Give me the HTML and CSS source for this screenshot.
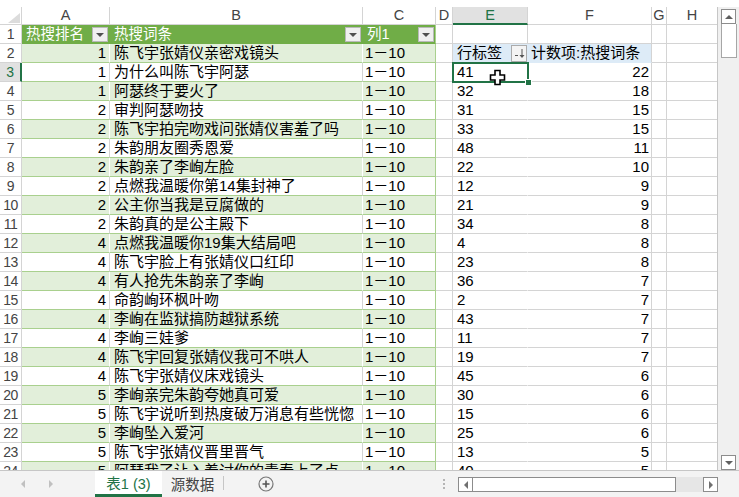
FILE: index.html
```html
<!DOCTYPE html>
<html lang="zh-CN">
<head>
  <meta charset="UTF-8">
  <title>表1 (3)</title>
  <link rel="stylesheet" href="styles.css">
</head>
<body>
<div class="app">
  <div class="main">
    <div class="grid">
      <div class="row colhead">
        <div class="c rh corner"><svg width="21" height="17" viewBox="0 0 21 17"><polygon points="20,6 20,16 8,16" fill="#dcdcdc"/></svg></div>
        <div class="c ca">A</div><div class="c cb">B</div><div class="c cc">C</div><div class="c cd">D</div>
        <div class="c ce selc">E</div><div class="c cf">F</div><div class="c cg">G</div><div class="c ch">H</div>
      </div>

      <div class="row">
        <div class="c rh">1</div>
        <div class="c ca t th">热搜排名<span class="dd"></span></div>
        <div class="c cb t th">热搜词条<span class="dd"></span></div>
        <div class="c cc t th last">列1<span class="dd"></span></div>
        <div class="c cd"></div><div class="c ce"></div><div class="c cf"></div><div class="c cg"></div><div class="c ch"></div>
      </div>

      <div class="row band">
        <div class="c rh">2</div>
        <div class="c ca t num">1</div><div class="c cb t">陈飞宇张婧仪亲密戏镜头</div><div class="c cc t last">1－10</div>
        <div class="c cd"></div>
        <div class="c ce pvh">行标签<span class="pbtn"><svg width="14" height="15" viewBox="0 0 14 15"><path d="M3 9.5h3M10 3v8" stroke="#555" stroke-width="1" fill="none"/><path d="M7.5 9l2.5 3 2.5-3z" fill="#555"/></svg></span></div>
        <div class="c cf pvh">计数项:热搜词条</div>
        <div class="c cg"></div><div class="c ch"></div>
      </div>

      <div class="row">
        <div class="c rh sel">3</div>
        <div class="c ca t num">1</div><div class="c cb t">为什么叫陈飞宇阿瑟</div><div class="c cc t last">1－10</div>
        <div class="c cd"></div><div class="c ce pv">41</div><div class="c cf num">22</div><div class="c cg"></div><div class="c ch"></div>
      </div>
      <div class="row band">
        <div class="c rh">4</div>
        <div class="c ca t num">1</div><div class="c cb t">阿瑟终于要火了</div><div class="c cc t last">1－10</div>
        <div class="c cd"></div><div class="c ce pv">32</div><div class="c cf num">18</div><div class="c cg"></div><div class="c ch"></div>
      </div>
      <div class="row">
        <div class="c rh">5</div>
        <div class="c ca t num">2</div><div class="c cb t">审判阿瑟吻技</div><div class="c cc t last">1－10</div>
        <div class="c cd"></div><div class="c ce pv">31</div><div class="c cf num">15</div><div class="c cg"></div><div class="c ch"></div>
      </div>
      <div class="row band">
        <div class="c rh">6</div>
        <div class="c ca t num">2</div><div class="c cb t">陈飞宇拍完吻戏问张婧仪害羞了吗</div><div class="c cc t last">1－10</div>
        <div class="c cd"></div><div class="c ce pv">33</div><div class="c cf num">15</div><div class="c cg"></div><div class="c ch"></div>
      </div>
      <div class="row">
        <div class="c rh">7</div>
        <div class="c ca t num">2</div><div class="c cb t">朱韵朋友圈秀恩爱</div><div class="c cc t last">1－10</div>
        <div class="c cd"></div><div class="c ce pv">48</div><div class="c cf num">11</div><div class="c cg"></div><div class="c ch"></div>
      </div>
      <div class="row band">
        <div class="c rh">8</div>
        <div class="c ca t num">2</div><div class="c cb t">朱韵亲了李峋左脸</div><div class="c cc t last">1－10</div>
        <div class="c cd"></div><div class="c ce pv">22</div><div class="c cf num">10</div><div class="c cg"></div><div class="c ch"></div>
      </div>
      <div class="row">
        <div class="c rh">9</div>
        <div class="c ca t num">2</div><div class="c cb t">点燃我温暖你第14集封神了</div><div class="c cc t last">1－10</div>
        <div class="c cd"></div><div class="c ce pv">12</div><div class="c cf num">9</div><div class="c cg"></div><div class="c ch"></div>
      </div>
      <div class="row band">
        <div class="c rh">10</div>
        <div class="c ca t num">2</div><div class="c cb t">公主你当我是豆腐做的</div><div class="c cc t last">1－10</div>
        <div class="c cd"></div><div class="c ce pv">21</div><div class="c cf num">9</div><div class="c cg"></div><div class="c ch"></div>
      </div>
      <div class="row">
        <div class="c rh">11</div>
        <div class="c ca t num">2</div><div class="c cb t">朱韵真的是公主殿下</div><div class="c cc t last">1－10</div>
        <div class="c cd"></div><div class="c ce pv">34</div><div class="c cf num">8</div><div class="c cg"></div><div class="c ch"></div>
      </div>
      <div class="row band">
        <div class="c rh">12</div>
        <div class="c ca t num">4</div><div class="c cb t">点燃我温暖你19集大结局吧</div><div class="c cc t last">1－10</div>
        <div class="c cd"></div><div class="c ce pv">4</div><div class="c cf num">8</div><div class="c cg"></div><div class="c ch"></div>
      </div>
      <div class="row">
        <div class="c rh">13</div>
        <div class="c ca t num">4</div><div class="c cb t">陈飞宇脸上有张婧仪口红印</div><div class="c cc t last">1－10</div>
        <div class="c cd"></div><div class="c ce pv">23</div><div class="c cf num">8</div><div class="c cg"></div><div class="c ch"></div>
      </div>
      <div class="row band">
        <div class="c rh">14</div>
        <div class="c ca t num">4</div><div class="c cb t">有人抢先朱韵亲了李峋</div><div class="c cc t last">1－10</div>
        <div class="c cd"></div><div class="c ce pv">36</div><div class="c cf num">7</div><div class="c cg"></div><div class="c ch"></div>
      </div>
      <div class="row">
        <div class="c rh">15</div>
        <div class="c ca t num">4</div><div class="c cb t">命韵峋环枫叶吻</div><div class="c cc t last">1－10</div>
        <div class="c cd"></div><div class="c ce pv">2</div><div class="c cf num">7</div><div class="c cg"></div><div class="c ch"></div>
      </div>
      <div class="row band">
        <div class="c rh">16</div>
        <div class="c ca t num">4</div><div class="c cb t">李峋在监狱搞防越狱系统</div><div class="c cc t last">1－10</div>
        <div class="c cd"></div><div class="c ce pv">43</div><div class="c cf num">7</div><div class="c cg"></div><div class="c ch"></div>
      </div>
      <div class="row">
        <div class="c rh">17</div>
        <div class="c ca t num">4</div><div class="c cb t">李峋三娃爹</div><div class="c cc t last">1－10</div>
        <div class="c cd"></div><div class="c ce pv">11</div><div class="c cf num">7</div><div class="c cg"></div><div class="c ch"></div>
      </div>
      <div class="row band">
        <div class="c rh">18</div>
        <div class="c ca t num">4</div><div class="c cb t">陈飞宇回复张婧仪我可不哄人</div><div class="c cc t last">1－10</div>
        <div class="c cd"></div><div class="c ce pv">19</div><div class="c cf num">7</div><div class="c cg"></div><div class="c ch"></div>
      </div>
      <div class="row">
        <div class="c rh">19</div>
        <div class="c ca t num">4</div><div class="c cb t">陈飞宇张婧仪床戏镜头</div><div class="c cc t last">1－10</div>
        <div class="c cd"></div><div class="c ce pv">45</div><div class="c cf num">6</div><div class="c cg"></div><div class="c ch"></div>
      </div>
      <div class="row band">
        <div class="c rh">20</div>
        <div class="c ca t num">5</div><div class="c cb t">李峋亲完朱韵夸她真可爱</div><div class="c cc t last">1－10</div>
        <div class="c cd"></div><div class="c ce pv">30</div><div class="c cf num">6</div><div class="c cg"></div><div class="c ch"></div>
      </div>
      <div class="row">
        <div class="c rh">21</div>
        <div class="c ca t num">5</div><div class="c cb t">陈飞宇说听到热度破万消息有些恍惚</div><div class="c cc t last">1－10</div>
        <div class="c cd"></div><div class="c ce pv">15</div><div class="c cf num">6</div><div class="c cg"></div><div class="c ch"></div>
      </div>
      <div class="row band">
        <div class="c rh">22</div>
        <div class="c ca t num">5</div><div class="c cb t">李峋坠入爱河</div><div class="c cc t last">1－10</div>
        <div class="c cd"></div><div class="c ce pv">25</div><div class="c cf num">6</div><div class="c cg"></div><div class="c ch"></div>
      </div>
      <div class="row">
        <div class="c rh">23</div>
        <div class="c ca t num">5</div><div class="c cb t">陈飞宇张婧仪晋里晋气</div><div class="c cc t last">1－10</div>
        <div class="c cd"></div><div class="c ce pv">13</div><div class="c cf num">5</div><div class="c cg"></div><div class="c ch"></div>
      </div>
      <div class="row band cut">
        <div class="c rh">24</div>
        <div class="c ca t num">5</div><div class="c cb t">阿瑟我了让入着讨你的青春上了点</div><div class="c cc t last">1－10</div>
        <div class="c cd"></div><div class="c ce pv">40</div><div class="c cf num">5</div><div class="c cg"></div><div class="c ch"></div>
      </div>

      <!-- active cell E3 -->
      <div class="active-cell"><span class="handle"></span></div>
      <svg class="cursor" width="17" height="17" viewBox="0 0 17 17"><path d="M6 1.5h5v4.5h4.5v5H11v4.5H6V11H1.5V6H6z" fill="#fff" stroke="#000" stroke-width="1.6"/></svg>
    </div>

    <div class="vscroll">
      <div class="sbtn"><span class="tri up"></span></div>
      <div class="vthumb"></div>
      <div class="vtrack"></div>
      <div class="sbtn"><span class="tri down"></span></div>
    </div>
  </div>

  <div class="tabbar">
    <div class="nav"><span class="tri left"></span><span class="tri right"></span></div>
    <div class="tab active">表1 (3)</div>
    <div class="tab">源数据</div>
    <div class="tabsep"></div>
    <div class="addsheet"><svg width="16" height="16" viewBox="0 0 16 16"><circle cx="8" cy="8" r="7" fill="none" stroke="#777" stroke-width="1.2"/><path d="M8 4.5v7M4.5 8h7" stroke="#555" stroke-width="1.6"/></svg></div>
    <div class="spacer"></div>
    <div class="splitter"><i></i><i></i><i></i></div>
    <div class="hscroll">
      <div class="sbtn"><span class="tri left dark"></span></div>
      <div class="hthumb"></div>
      <div class="htrack"></div>
      <div class="sbtn"><span class="tri right dark"></span></div>
    </div>
  </div>
</div>
</body>
</html>
```

FILE: styles.css
```css
* {
  box-sizing: border-box;
}

body {
  margin: 0;
  background: #fff;
  font-family: "Liberation Sans", "Noto Sans CJK SC", sans-serif;
  font-size: 15px;
  color: #000;
  overflow: hidden;
}

.app {
  width: 739px;
  height: 497px;
  display: flex;
  flex-direction: column;
}

.main {
  display: flex;
  height: 470px;
  padding-top: 7px;
}

.grid {
  position: relative;
  width: 718px;
  height: 463px;
  overflow: hidden;
  border-right: 1px solid #c6c6c6;
}

.row {
  display: flex;
  height: 19px;
}

.row.colhead {
  height: 18px;
}

/* last row only shows its top strip */
.row.cut {
  height: 8px;
  overflow: hidden;
}

.c {
  flex: none;
  height: 100%;
  padding: 0 3px;
  border-right: 1px solid #d4d4d4;
  border-bottom: 1px solid #d4d4d4;
  line-height: 18px;
  white-space: nowrap;
  overflow: hidden;
}

.cut .c {
  height: 19px;
}

.rh { width: 22px; }
.ca { width: 88px; }
.cb { width: 253px; }
.cc { width: 73px; }
.cd { width: 17px; }
.ce { width: 75px; }
.cf { width: 124px; }
.cg { width: 15px; }
.ch { width: 51px; }

.rh {
  padding: 0;
  text-align: center;
  color: #444;
  font-size: 14px;
  background: #fff;
  letter-spacing: -0.5px;
}

.rh.sel {
  background: #e1e1e1;
  color: #217346;
  border-right: 2px solid #217346;
}

.colhead .c {
  padding: 0;
  text-align: center;
  color: #444;
  font-size: 14.5px;
  line-height: 17px;
}

.colhead .selc {
  background: #e1e1e1;
  color: #217346;
  border-bottom: 2px solid #217346;
}

.corner svg {
  display: block;
}

.num {
  text-align: right;
}

.cb.t {
  padding-left: 4px;
}

.cc.t {
  padding-left: 2px;
}

/* excel table, green medium style */
.t {
  border-bottom-color: #a9d08e;
}

.band .t {
  background: #e2efda;
  border-right-color: #fff;
}

.t.last {
  border-right-color: #a9d08e;
}

.t.th {
  display: flex;
  align-items: center;
  justify-content: space-between;
  padding: 0 1px 0 4px;
  font-size: 14.5px;
  background: #70ad47;
  color: #fff;
  border-right-color: #70ad47;
  border-bottom-color: #70ad47;
}

.t.th.last {
  border-right-color: #a9d08e;
}

.dd {
  position: relative;
  width: 16px;
  height: 15px;
  background: #f0f0f0;
  border: 1px solid #b9b9b9;
}

.dd::after {
  content: "";
  position: absolute;
  left: 3px;
  top: 5px;
  border-left: 4px solid transparent;
  border-right: 4px solid transparent;
  border-top: 4px solid #505050;
}

/* pivot */
.pvh {
  background: #ddebf7;
  border-bottom-color: #ddebf7;
  padding-left: 4px;
}

.ce.pvh {
  display: flex;
  align-items: center;
  justify-content: space-between;
  padding-right: 0;
  border-right-color: #ddebf7;
}

.cf.pvh {
  padding-left: 3px;
}

.pbtn {
  width: 16px;
  height: 17px;
  background: #f4f4f4;
  border: 1px solid #ababab;
  display: flex;
  align-items: center;
  justify-content: center;
}

.pv {
  padding-left: 4px;
  border-right-color: #fff;
}

.cf.num {
  padding-right: 2px;
}

.active-cell {
  position: absolute;
  left: 452px;
  top: 55px;
  width: 77px;
  height: 21px;
  border: 2px solid #217346;
}

.handle {
  position: absolute;
  right: -5px;
  bottom: -5px;
  width: 7px;
  height: 7px;
  background: #217346;
  border: 1px solid #fff;
}

.cursor {
  position: absolute;
  left: 489px;
  top: 62px;
}

/* scrollbars */
.vscroll {
  width: 21px;
  height: 463px;
  background: #f0f0f0;
  padding: 2px 2px 0 3px;
  display: flex;
  flex-direction: column;
}

.sbtn {
  flex: none;
  width: 15px;
  height: 15px;
  background: #fff;
  border: 1px solid #8c8c8c;
  display: flex;
  align-items: center;
  justify-content: center;
}

.vthumb {
  flex: none;
  height: 34px;
  background: #fff;
  border: 1px solid #a6a6a6;
  border-top: none;
}

.vtrack {
  flex: 1;
}

.tri {
  width: 0;
  height: 0;
}

.tri.up {
  border-left: 4px solid transparent;
  border-right: 4px solid transparent;
  border-bottom: 4px solid #606060;
}

.tri.down {
  border-left: 4px solid transparent;
  border-right: 4px solid transparent;
  border-top: 4px solid #606060;
}

.tri.left {
  border-top: 4px solid transparent;
  border-bottom: 4px solid transparent;
  border-right: 4px solid #c0c0c0;
}

.tri.right {
  border-top: 4px solid transparent;
  border-bottom: 4px solid transparent;
  border-left: 4px solid #c0c0c0;
}

.tri.dark.left { border-right-color: #707070; }
.tri.dark.right { border-left-color: #707070; }

/* sheet tabs */
.tabbar {
  height: 27px;
  display: flex;
  align-items: stretch;
  background: #f3f3f3;
  border-top: 1px solid #c6c6c6;
  font-size: 14.5px;
}

.nav {
  width: 95px;
  display: flex;
  align-items: center;
  gap: 24px;
  padding-left: 21px;
}

.tab {
  width: 61px;
  display: flex;
  align-items: center;
  justify-content: center;
  color: #444;
  padding-bottom: 2px;
}

.tab.active {
  width: 67px;
  background: #fff;
  color: #217346;
  border-bottom: 3px solid #217346;
  padding-bottom: 0;
}

.tabsep {
  width: 1px;
  margin: 5px 0 7px;
  background: #c6c6c6;
}

.addsheet {
  display: flex;
  align-items: center;
  padding-left: 34px;
}

.spacer {
  flex: 1;
}

.splitter {
  width: 22px;
  display: flex;
  flex-direction: column;
  align-items: center;
  justify-content: center;
  gap: 2px;
  padding-right: 6px;
}

.splitter i {
  width: 2px;
  height: 2px;
  background: #b5b5b5;
}

.hscroll {
  width: 260px;
  margin: 6px 21px 0 0;
  height: 15px;
  display: flex;
}

.hthumb {
  width: 203px;
  background: #fff;
  border: 1px solid #8c8c8c;
  border-left: none;
}

.htrack {
  flex: 1;
  background: #e6e6e6;
}
```
